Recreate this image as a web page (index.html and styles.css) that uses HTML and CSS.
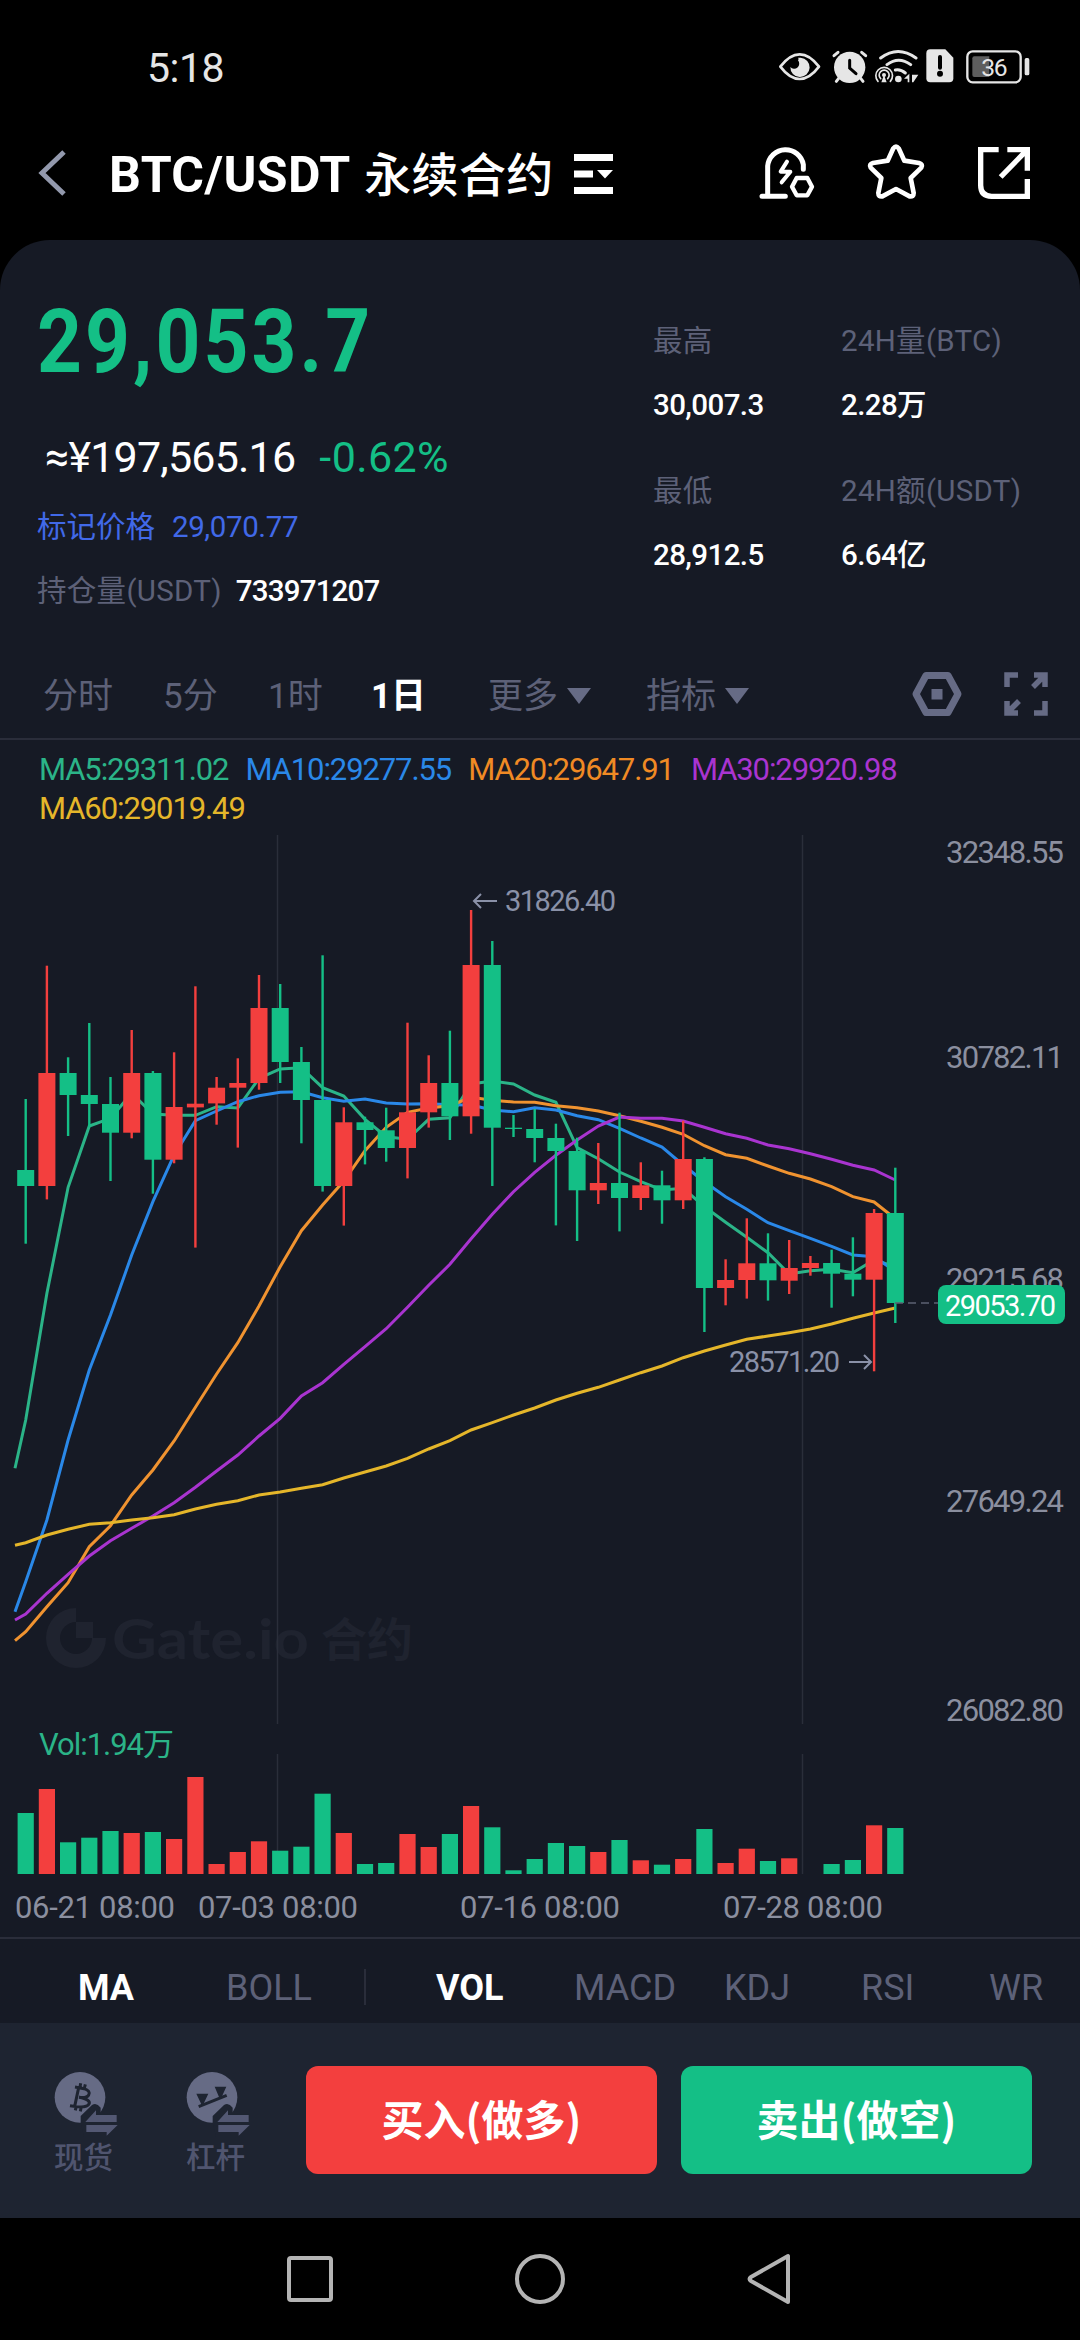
FILE: index.html
```html
<!DOCTYPE html>
<html lang="zh-CN">
<head>
<meta charset="UTF-8">
<title>BTC/USDT 永续合约</title>
<link rel="stylesheet" href="styles.css">
</head>
<body>

<!-- 状态栏 -->
<div class="status">
	<span class="time">5:18</span>
	<svg class="status_icons" width="254" height="40" viewBox="110 50 762 120">
		<path d="M117 109Q145 72 175 72Q205 72 233 109Q205 146 175 146Q145 146 117 109Z" fill="none" stroke="#e6e6e6" stroke-width="8" stroke-linejoin="round"/>
		<path d="M178 82A29 29 0 1 1 147 110A15 15 0 1 0 170 90Q174 86 170 82Z" fill="#e6e6e6"/>
		<circle cx="325" cy="111" r="47" fill="#e6e6e6"/>
		<path d="M278 76L290 66M373 76L361 66M292 144L285 153M358 144L365 153" stroke="#e6e6e6" stroke-width="9" stroke-linecap="round"/>
		<path d="M325 90V113L344 130" fill="none" stroke="#000" stroke-width="9" stroke-linecap="round"/>
		<path d="M418 83Q470 44 524 83M437 103Q472 76 508 103" fill="none" stroke="#e6e6e6" stroke-width="9" stroke-linecap="round"/>
		<path d="M462 119Q478 116 492 128" fill="none" stroke="#e6e6e6" stroke-width="9" stroke-linecap="round"/>
		<path d="M410 153A25 25 0 1 1 447 153M418 145A15 15 0 1 1 439 145" fill="none" stroke="#e6e6e6" stroke-width="5" stroke-linecap="round"/>
		<circle cx="428" cy="134" r="6" fill="#e6e6e6"/>
		<path d="M428 134L420 156H436Z" fill="#e6e6e6"/>
		<circle cx="471" cy="146" r="10" fill="#e6e6e6"/>
		<path d="M488 145L504 130V156H499V145ZM512 133L531 133L516 156H512Z" fill="#e6e6e6"/>
		<path d="M567 57H612L636 82V144Q636 156 624 156H567Q555 156 555 144V69Q555 57 567 57Z" fill="#e6e6e6"/>
		<path d="M596 80V112" stroke="#000" stroke-width="12" stroke-linecap="round"/>
		<circle cx="596" cy="130" r="9" fill="#000"/>
		<rect x="678" y="63" width="160" height="93" rx="16" fill="none" stroke="#e6e6e6" stroke-width="7"/>
		<path d="M699 78H744V140H699Q693 140 693 134V84Q693 78 699 78Z" fill="#5e5e5e"/>
		<rect x="850" y="83" width="14" height="52" rx="5" fill="#e6e6e6"/>
		<text x="757" y="137" class="battery">36</text>
	</svg>
</div>

<!-- 标题栏 -->
<div class="header">
	<svg class="back" width="32" height="50" viewBox="0 0 32 50"><path d="M27 4L5 25L27 46" fill="none" stroke="#9399ad" stroke-width="5"/></svg>
	<h1>BTC/USDT <b>永续合约</b></h1>
	<svg class="menu" width="39" height="40" viewBox="0 0 39 40"><path d="M0 0H39V7H0ZM0 16.500H19V23.500H0ZM0 33H39V40H0ZM23 16H39L31 24.500Z" fill="#fff"/></svg>
	<svg class="alert" width="56" height="56" viewBox="50 342 168 168">
		<path d="M76 496V408A54 54 0 0 1 183 404V418M59 499H129" fill="none" stroke="#fff" stroke-width="15" stroke-linecap="round"/>
		<path d="M134 395L115 425H144L118 457" fill="none" stroke="#fff" stroke-width="12" stroke-linejoin="round" stroke-linecap="round"/>
		<path d="M163 444H195L209 470L195 496H163L149 470Z" fill="none" stroke="#fff" stroke-width="13" stroke-linejoin="round"/>
	</svg>
	<svg class="star" width="58" height="56" viewBox="375 342 174 168">
		<path d="M454 355Q462 345 470 355L487 392L531 399Q544 403 538 413L506 444L515 489Q515 501 503 499L462 477L421 499Q409 501 409 489L418 444L386 413Q380 403 393 399L437 392Z" fill="none" stroke="#fff" stroke-width="14" stroke-linejoin="round"/>
	</svg>
	<svg width="52" height="52" viewBox="708 348 156 156">
		<path d="M770 356H716V463Q716 496 749 496H856V444M796 356H856V419M853 359L776 438" fill="none" stroke="#fff" stroke-width="16"/>
	</svg>
</div>

<div class="panel">
	<!-- 行情 -->
	<div class="quote">
		<div class="quote_left">
			<div class="price">29,053.7</div>
			<div class="cny"><span>≈¥197,565.16</span><span class="green">-0.62%</span></div>
			<div class="mark"><span>标记价格</span><span class="num">29,070.77</span></div>
			<div class="hold"><span>持仓量(USDT)</span><b>733971207</b></div>
		</div>
		<dl><dt>最高</dt><dd>30,007.3</dd><dt>最低</dt><dd>28,912.5</dd></dl>
		<dl><dt>24H量(BTC)</dt><dd>2.28万</dd><dt>24H额(USDT)</dt><dd>6.64亿</dd></dl>
	</div>

	<!-- 周期 -->
	<div class="period">
		<span>分时</span>
		<span>5分</span>
		<span>1时</span>
		<span class="on">1日</span>
		<span>更多<i></i></span>
		<span>指标<i></i></span>
		<svg width="50" height="44" viewBox="0 0 50 44"><path d="M14 3.500H36L46 22L36 40.500H14L4 22Z" fill="none" stroke="#666b85" stroke-width="7" stroke-linejoin="round"/><rect x="19.500" y="17" width="11" height="10.500" fill="#666b85"/></svg>
		<svg width="44" height="44" viewBox="0 0 44 44"><path d="M14 3H3V15M30 3H41V15M41 3L29 15M41 29V41H30M3 29V41H14M3 41L15 29" fill="none" stroke="#666b85" stroke-width="5.500"/></svg>
	</div>

	<!-- K线 -->
	<div class="legend">
		<span class="ma5">MA5:29311.02</span>
		<span class="ma10">MA10:29277.55</span>
		<span class="ma20">MA20:29647.91</span>
		<span class="ma30">MA30:29920.98</span>
		<span class="ma60">MA60:29019.49</span>
	</div>
	<svg class="chart" width="1080" height="1102" viewBox="0 835 1080 1102">
		<g class="watermark">
			<path d="M76 1608A30 30 0 1 0 106 1638H92A16 16 0 1 1 76 1622ZM76 1622H93V1638H76Z"/>
			<text x="112" y="1659" class="logo" textLength="197" lengthAdjust="spacingAndGlyphs">Gate.io</text>
			<text x="321" y="1656" class="logo_cn">合约</text>
		</g>
		<path d="M277.500 835V1724M277.500 1754V1874M802.500 835V1724M802.500 1754V1874" stroke="#2a2e3a" stroke-width="1.500"/>
		<g id="lines"></g>
		<g id="candles"></g>
		<g id="volumes"></g>
		<path d="M895 1303H938" stroke="#5c6173" stroke-width="1.500" stroke-dasharray="8 5"/>
		<g class="axis">
			<text x="946" y="863" textLength="118">32348.55</text>
			<text x="946" y="1068" textLength="118">30782.11</text>
			<text x="946" y="1290" textLength="118">29215.68</text>
			<text x="946" y="1512" textLength="118">27649.24</text>
			<text x="946" y="1721" textLength="118">26082.80</text>
			<text x="15" y="1918" textLength="160">06-21 08:00</text>
			<text x="198" y="1918" textLength="160">07-03 08:00</text>
			<text x="460" y="1918" textLength="160">07-16 08:00</text>
			<text x="723" y="1918" textLength="160">07-28 08:00</text>
		</g>
		<rect x="938" y="1285" width="127" height="39" rx="8" fill="#14bf86"/>
		<text x="945" y="1316" class="tag" textLength="111">29053.70</text>
		<g class="extreme">
			<text x="505" y="911" textLength="111">31826.40</text>
			<text x="729" y="1372" textLength="111">28571.20</text>
			<path d="M497 901H474M481 894L474 901L481 908M849 1362H871M864 1355L871 1362L864 1369"/>
		</g>
		<text x="39" y="1755" class="vol" textLength="135">Vol:1.94万</text>
	</svg>

	<!-- 指标 -->
	<div class="tabs">
		<span class="on">MA</span>
		<span>BOLL</span>
		<i></i>
		<span class="on">VOL</span>
		<span>MACD</span>
		<span>KDJ</span>
		<span>RSI</span>
		<span>WR</span>
	</div>
</div>

<!-- 下单 -->
<div class="trade">
	<div class="entry">
		<svg width="64" height="66" viewBox="100 60 192 198">
			<circle cx="178" cy="139" r="76" fill="#666b85"/>
			<path d="M163 108L190 113Q211 120 204 132Q199 142 175 139Q212 146 205 159Q198 173 148 164M174 110L162 166M180 97L177 113M194 100L190 116M167 164L164 178M182 167L179 181" fill="none" stroke="#1e2431" stroke-width="9"/>
			<path d="M180 216V195L214 162Q228 154 240 170V190H292V258H190Z" fill="#1e2431"/>
			<path d="M194 213L226 178V192H288V213ZM197 222H291L258 254V243H197Z" fill="#535873"/>
		</svg>
		<span>现货</span>
	</div>
	<div class="entry">
		<svg width="64" height="66" viewBox="100 60 192 198">
			<circle cx="178" cy="139" r="76" fill="#666b85"/>
			<path d="M138 167L222 133" stroke="#1e2431" stroke-width="9"/>
			<path d="M131 128H167L152 160H146ZM186 107H221L207 138H199Z" fill="#1e2431"/>
			<path d="M180 216V195L214 162Q228 154 240 170V190H292V258H190Z" fill="#1e2431"/>
			<path d="M194 213L226 178V192H288V213ZM197 222H291L258 254V243H197Z" fill="#535873"/>
		</svg>
		<span>杠杆</span>
	</div>
	<button class="buy">买入(做多)</button>
	<button class="sell">卖出(做空)</button>
</div>

<!-- 导航键 -->
<div class="nav">
	<svg width="50" height="54" viewBox="0 0 50 54"><rect x="4" y="6" width="42" height="42" rx="2"/></svg>
	<svg width="54" height="54" viewBox="0 0 54 54"><circle cx="27" cy="27" r="23"/></svg>
	<svg width="50" height="54" viewBox="0 0 50 54"><path d="M43 4V50L6 29Q3 27 6 25Z"/></svg>
</div>

<script src="chart.js"></script>
</body>
</html>
```

FILE: styles.css
```css
*{box-sizing:border-box;}
body{margin:0;width:1080px;height:2340px;background:#000;color:#fff;font-family:Roboto,"Noto Sans CJK SC",sans-serif;overflow:hidden;}
svg{display:block;flex:none;}
i{font-style:normal;}
.green{color:#14bf86;}

.status{display:flex;justify-content:space-between;height:134px;padding:47px 48px 0 147px;}
.time{font-size:41px;line-height:43px;color:#e6e6e6;letter-spacing:-.5px;}
.battery{font-size:74px;fill:#e6e6e6;text-anchor:middle;letter-spacing:-4px;}

.header{display:flex;align-items:center;height:106px;padding:0 50px 28px 37px;}
.header h1{margin:4px 0 0 40px;font-size:50px;line-height:78px;font-weight:700;letter-spacing:.4px;white-space:nowrap;}
.header h1 b{font-size:47px;font-weight:500;margin-left:2px;}
.menu{margin:1px 0 0 20px;}
.alert{margin:-2px 0 0 auto;}
.star{margin:-2px 53px 0 52px;}

.panel{height:1783px;background:#161a25;border-radius:50px 50px 0 0;}
.quote{display:flex;height:412px;padding:50px 0 0 37px;}
.quote_left{width:615px;}
.price{font-size:89px;line-height:104px;font-weight:700;color:#14bf86;letter-spacing:3.500px;margin-bottom:33px;transform:scaleX(.88);transform-origin:0 0;}
.cny{font-size:43px;line-height:60px;padding-left:8px;letter-spacing:-.8px;}
.cny .green{margin-left:24px;letter-spacing:.4px;}
.mark{font-size:29.500px;line-height:50px;margin-top:15px;color:#4169e8;}
.mark .num{margin-left:17px;letter-spacing:-.4px;}
.hold{font-size:29.500px;line-height:52px;margin-top:13px;color:#5d6178;letter-spacing:.3px;}
.hold b{margin-left:14px;color:#fff;font-weight:500;letter-spacing:-.8px;}
.quote dl{margin:0;padding:26px 0 0 1px;width:188px;font-size:29.500px;line-height:50px;white-space:nowrap;}
.quote dt{color:#5d6178;letter-spacing:.3px;}
.quote dd{margin:14px 0 36px;font-weight:500;letter-spacing:-.6px;}

.period{display:grid;grid-template-columns:120px 105px 103px 117px 158px 266px 92px 44px;align-items:center;height:88px;padding-left:43px;border-bottom:2px solid #2a2d3a;font-size:35px;line-height:50px;color:#5d6178;}
.period span{white-space:nowrap;padding-top:3px;}
.period svg{margin-top:-2px;}
.period .on,.tabs .on{color:#fff;font-weight:700;}
.period i{display:inline-block;margin-left:9px;vertical-align:4px;border:12px solid transparent;border-top:16px solid #666b85;border-bottom:0;}

.legend{display:flex;flex-wrap:wrap;align-content:flex-start;column-gap:17px;height:95px;padding:10px 150px 0 39px;font-size:31px;line-height:39px;letter-spacing:-1.100px;}
.ma5{color:#2bb488;}
.ma10{color:#2a88e8;}
.ma20{color:#f08a24;}
.ma30{color:#a934d0;}
.ma60{color:#e5b62a;}

.chart text{font-size:31px;}
.axis{fill:#8b8f9f;}
.chart .tag{font-size:29px;fill:#fff;}
.chart .vol{fill:#2bb488;}
.chart .extreme text{font-size:29px;fill:#8a91a8;}
.extreme path{fill:none;stroke:#8a91a8;stroke-width:2;}
.watermark{fill:#1f232f;}
.chart .logo{font-family:Lato,sans-serif;font-size:56px;font-weight:700;}
.chart .logo_cn{font-size:46px;font-weight:700;}
#lines path{fill:none;stroke-width:3;}
.up{fill:#f33f3e;}
.down{fill:#14bf86;}

.tabs{display:flex;height:86px;padding:13px 0 0 78px;border-top:2px solid #2a2d3a;font-size:36px;line-height:72px;color:#5d6178;}
.tabs span{flex:none;width:148px;}
.tabs span:nth-child(2){width:138px;}
.tabs i{flex:none;width:2px;height:36px;margin:17px 70px 0 0;background:#2a2d3a;}
.tabs span:nth-child(4){width:138px;}
.tabs span:nth-child(5){width:150px;}
.tabs span:nth-child(6){width:137px;}
.tabs span:nth-child(7){width:128px;}

.trade{display:flex;height:195px;padding:43px 48px 0 54px;background:#1e2431;}
.entry{width:132px;padding-top:5px;font-size:29.500px;line-height:42px;font-weight:500;color:#50556f;}
.trade button{width:351px;height:108px;padding:0 0 6px;border:0;border-radius:12px;color:#fff;font:700 42px "Noto Sans CJK SC",sans-serif;}
.buy{background:#f33f3e;margin:0 24px 0 -12px;}
.sell{background:#14bf86;}

.nav{display:flex;justify-content:center;gap:178px;height:122px;padding:34px 0 0;}
.nav svg{fill:none;stroke:#b4b4b4;stroke-width:4;stroke-linejoin:round;}
```

FILE: chart.js
```javascript
// 每根K线: 颜色, 最高, 实体上沿, 实体下沿, 最低, 成交量高度
var data = [
	['G',657,870,918,1091,183],['R',257,579,918,958,255],['G',532,579,645,768,95],['G',429,645,672,742,109],
	['G',591,672,758,903,129],['R',450,579,758,775,123],['G',573,579,839,941,126],['R',517,681,839,850,105],
	['R',319,671,682,1103,291],['R',591,623,670,734,30],['R',535,609,623,803,66],['R',285,384,609,629,98],
	['G',312,384,546,609,70],['G',501,546,660,790,82],['G',226,660,918,935,241],['R',682,727,918,1037,123],
	['G',710,727,750,853,30],['G',683,751,804,845,33],['R',428,697,804,895,120],['R',526,609,697,743,81],
	['G',452,609,709,780,120],['R',90,255,709,761,204],['G',183,255,743,918,140],['G',705,743,747,771,11],
	['G',687,747,774,847,45],['G',731,774,813,1036,93],['G',773,813,931,1083,84],['R',789,909,931,972,66],
	['G',698,909,954,1054,102],['R',847,916,954,990,41],['G',872,916,961,1031,28],['R',722,837,961,987,45],
	['G',832,837,1224,1356,135],['R',1138,1200,1224,1276,33],['R',1015,1150,1200,1256,76],['G',1060,1150,1201,1262,39],
	['R',1080,1164,1202,1242,47],['R',1128,1149,1164,1187,0],['G',1109,1149,1181,1283,30],['G',1072,1181,1199,1249,42],
	['R',987,999,1199,1474,146],['G',863,999,1269,1329,138]
];
// 均线, 第一个点在左边界
var ma = {
	'#2bb488':[1765,1620,1240,922,738,715,640,702,706,706,680,684,595,567,563,623,648,718,770,778,718,713,612,603,612,645,667,803,836,876,905,930,925,980,1027,1072,1118,1182,1172,1168,1178,1140,1160],
	'#2a88e8':[2195,2105,1920,1680,1470,1305,1125,965,825,722,693,665,647,637,635,653,664,657,669,672,671,674,675,690,695,683,690,707,719,745,774,801,855,905,950,988,1028,1052,1075,1099,1125,1130,1174],
	'#f09330':[2282,2255,2180,2108,2000,1937,1845,1770,1683,1582,1482,1388,1278,1160,1052,975,903,812,742,697,684,677,652,661,666,667,677,683,693,707,724,742,763,797,824,835,858,880,897,920,950,966,1016],
	'#a934d0':[2220,2202,2140,2083,2028,1982,1945,1908,1868,1822,1773,1725,1668,1615,1548,1508,1453,1400,1346,1282,1216,1153,1076,1003,935,877,826,780,738,711,715,715,723,742,761,775,795,806,821,838,856,870,900],
	'#e5b62a':[1996,1988,1965,1948,1933,1928,1920,1913,1904,1887,1873,1862,1845,1836,1825,1814,1794,1776,1758,1735,1707,1682,1650,1628,1605,1584,1560,1540,1522,1500,1478,1458,1433,1413,1395,1378,1368,1358,1347,1332,1315,1299,1284]
};
var getX = function (i){ return 25.67+i*21.21; };
var getY = function (v){ return 880+v/3; };
var rect = function (cls,x,y,w,h){
	return '<rect class="'+cls+'" x="'+x.toFixed(1)+'" y="'+y.toFixed(1)+'" width="'+w+'" height="'+h.toFixed(1)+'"/>';
};
var candles='',volumes='',lines='';
data.forEach(function (d,i){
	var cls=d[0]=='R'?'up':'down',x=getX(i);
	candles+=rect(cls,x-1.2,getY(d[1]),2.4,(d[4]-d[1])/3);
	candles+=rect(cls,x-8.5,getY(d[2]),17,(d[3]-d[2])/3);
	volumes+=rect(cls,x-8.1,1874-d[5]/3,16.2,d[5]/3);
});
for(var color in ma){
	var pts=ma[color].map(function (v,i){
		return (i ? getX(i-1) : 15).toFixed(1)+' '+getY(v).toFixed(1);
	});
	lines+='<path stroke="'+color+'" d="M'+pts.join('L')+'"/>';
}
document.getElementById('candles').innerHTML=candles;
document.getElementById('volumes').innerHTML=volumes;
document.getElementById('lines').innerHTML=lines;
```
